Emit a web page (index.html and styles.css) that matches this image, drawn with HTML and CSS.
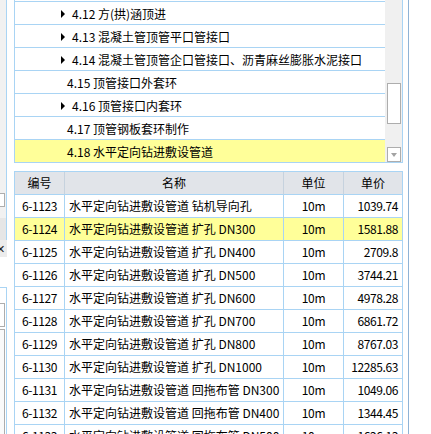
FILE: index.html
```html
<!DOCTYPE html>
<html lang="zh-CN">
<head>
<meta charset="utf-8">
<title>定额列表</title>
<link rel="stylesheet" href="styles.css">
</head>
<body>
<div class="page">
  <div class="side">
    <div class="s s1"></div>
    <div class="s s2"><span class="mini"></span></div>
    <div class="s s3"></div>
    <div class="s s4"></div>
    <div class="s5"><span class="xg">✕</span></div>
    <div class="s6"></div>
    <div class="s s7"></div>
    <div class="s s8"><span class="minibox"></span></div>
    <div class="s s9"><span class="minibox tall"></span></div>
  </div>

  <div class="main">
    <div class="tree">
      <div class="tree-rows">
        <div class="trow top"></div>
        <div class="trow"><span class="arrow"></span><span class="tt">4.12 方(拱)涵顶进</span></div>
        <div class="trow"><span class="arrow"></span><span class="tt">4.13 混凝土管顶管平口管接口</span></div>
        <div class="trow"><span class="arrow"></span><span class="tt">4.14 混凝土管顶管企口管接口、沥青麻丝膨胀水泥接口</span></div>
        <div class="trow leaf"><span class="tt">4.15 顶管接口外套环</span></div>
        <div class="trow"><span class="arrow"></span><span class="tt">4.16 顶管接口内套环</span></div>
        <div class="trow leaf"><span class="tt">4.17 顶管钢板套环制作</span></div>
        <div class="trow leaf last sel"><span class="tt">4.18 水平定向钻进敷设管道</span></div>
      </div>
      <div class="vscroll">
        <div class="thumb"></div>
        <div class="sbtn"><span class="down"></span></div>
      </div>
    </div>

    <div class="grid">
      <div class="row head">
        <div class="c">编号</div><div class="c">名称</div><div class="c">单位</div><div class="c">单价</div>
      </div>
      <div class="row"><div class="c code">6-1123</div><div class="c name">水平定向钻进敷设管道 钻机导向孔</div><div class="c unit">10m</div><div class="c price">1039.74</div></div>
      <div class="row sel"><div class="c code">6-1124</div><div class="c name">水平定向钻进敷设管道 扩孔 DN300</div><div class="c unit">10m</div><div class="c price">1581.88</div></div>
      <div class="row"><div class="c code">6-1125</div><div class="c name">水平定向钻进敷设管道 扩孔 DN400</div><div class="c unit">10m</div><div class="c price">2709.8</div></div>
      <div class="row"><div class="c code">6-1126</div><div class="c name">水平定向钻进敷设管道 扩孔 DN500</div><div class="c unit">10m</div><div class="c price">3744.21</div></div>
      <div class="row"><div class="c code">6-1127</div><div class="c name">水平定向钻进敷设管道 扩孔 DN600</div><div class="c unit">10m</div><div class="c price">4978.28</div></div>
      <div class="row"><div class="c code">6-1128</div><div class="c name">水平定向钻进敷设管道 扩孔 DN700</div><div class="c unit">10m</div><div class="c price">6861.72</div></div>
      <div class="row"><div class="c code">6-1129</div><div class="c name">水平定向钻进敷设管道 扩孔 DN800</div><div class="c unit">10m</div><div class="c price">8767.03</div></div>
      <div class="row"><div class="c code">6-1130</div><div class="c name">水平定向钻进敷设管道 扩孔 DN1000</div><div class="c unit">10m</div><div class="c price">12285.63</div></div>
      <div class="row"><div class="c code">6-1131</div><div class="c name">水平定向钻进敷设管道 回拖布管 DN300</div><div class="c unit">10m</div><div class="c price">1049.06</div></div>
      <div class="row"><div class="c code">6-1132</div><div class="c name">水平定向钻进敷设管道 回拖布管 DN400</div><div class="c unit">10m</div><div class="c price">1344.45</div></div>
      <div class="row"><div class="c code">6-1133</div><div class="c name">水平定向钻进敷设管道 回拖布管 DN500</div><div class="c unit">10m</div><div class="c price">1626.13</div></div>
    </div>
  </div>

  <div class="vline"></div>
</div>
</body>
</html>
```

FILE: styles.css
```css
html, body {
  margin: 0;
  padding: 0;
  background: #ffffff;
}
body {
  width: 431px;
  height: 434px;
  overflow: hidden;
  font-family: "Noto Sans CJK SC", "Microsoft YaHei", sans-serif;
  font-size: 12px;
  color: #000000;
}
.page {
  display: flex;
  height: 434px;
  overflow: hidden;
}

/* left strip (edge of neighbouring panel) */
.side {
  width: 7px;
  flex: none;
  display: flex;
  flex-direction: column;
}
.s {
  box-sizing: border-box;
  border-right: 1px solid #a9d4f4;
  background: #f1f1f1;
  flex: none;
}
.s1 { height: 193px; }
.s2 { height: 14px; display: flex; }
.mini {
  display: block;
  width: 5px;
  height: 14px;
  box-sizing: border-box;
  border: 1px solid #adadad;
  border-left: none;
  background: #ffffff;
}
.s3 { height: 11px; }
.s4 { height: 22px; background: #e6e6e6; }
.s5 {
  height: 17px;
  width: 7px;
  background: #ececec;
  overflow: hidden;
  line-height: 17px;
  font-size: 11px;
  flex: none;
}
.xg {
  display: inline-block;
  margin-left: -4px;
  color: #222;
}
.s6 { height: 30px; flex: none; }
.s7 {
  height: 16px;
  background: #ffffff;
  border-top: 1px solid #a9d4f4;
}
.s8 { height: 24px; background: #ffffff; display: flex; }
.s9 { flex: 1; background: #ffffff; display: flex; }
.minibox {
  display: block;
  width: 5px;
  height: 24px;
  box-sizing: border-box;
  border: 1px solid #adadad;
  border-left: none;
  background: #ffffff;
}
.minibox.tall {
  height: auto;
  flex: none;
  border-bottom: none;
  margin-top: 2px;
  background: #fafafa;
}

/* main column */
.main {
  margin-left: 7px;
  width: 389px;
  flex: none;
}
.vline {
  margin-left: 5px;
  width: 1px;
  background: #8fb3d6;
  flex: none;
}

/* tree */
.tree {
  display: flex;
  border: 1px solid #a9d4f4;
  border-top: none;
}
.tree-rows {
  width: 370px;
  flex: none;
}
.trow {
  height: 22px;
  border-bottom: 1px solid #a9d4f4;
  display: flex;
  align-items: center;
  white-space: nowrap;
  overflow: hidden;
  background: #ffffff;
}
.trow.top { height: 1px; }
.trow.last { border-bottom: none; }
.trow.sel { background: #ffff99; }
.trow.leaf { padding-left: 52px; }
.tt {
  line-height: 22px;
  padding-top: 2px;
}
.arrow {
  width: 0;
  height: 0;
  border-left: 4px solid #000;
  border-top: 4px solid transparent;
  border-bottom: 4px solid transparent;
  margin-left: 46px;
  margin-right: 7px;
  margin-top: 2px;
  flex: none;
}
.vscroll {
  width: 17px;
  flex: none;
  background: #f0f0f0;
  display: flex;
  flex-direction: column;
}
.thumb {
  margin: 83px 1px 0 2px;
  height: 41px;
  box-sizing: border-box;
  border: 1px solid #adadad;
  background: #ffffff;
}
.sbtn {
  margin: auto 1px 0 2px;
  height: 15px;
  box-sizing: border-box;
  border: 1px solid #adadad;
  background: #ffffff;
  display: flex;
  align-items: center;
  justify-content: center;
}
.down {
  width: 0;
  height: 0;
  border-top: 4px solid #a3a3a3;
  border-left: 3px solid transparent;
  border-right: 3px solid transparent;
}

/* table */
.grid {
  margin-top: 8px;
  border-left: 1px solid #a9d4f4;
  border-top: 1px solid #a9d4f4;
}
.row {
  display: grid;
  grid-template-columns: 50px 219px 60px 59px;
  background: #ffffff;
}
.row.sel { background: #ffff99; }
.c {
  height: 23px;
  box-sizing: border-box;
  border-right: 1px solid #a9d4f4;
  border-bottom: 1px solid #a9d4f4;
  line-height: 22px;
  white-space: nowrap;
  overflow: hidden;
}
.head .c {
  background: #e1e4e9;
  border-right-color: #c6d2de;
  text-align: center;
}
.head .c:last-child { border-right-color: #a9d4f4; }
.code { text-align: center; letter-spacing: -0.4px; }
.name { padding-left: 4px; }
.unit { text-align: center; letter-spacing: -0.3px; }
.price { text-align: right; padding-right: 4px; letter-spacing: -0.4px; }
```
